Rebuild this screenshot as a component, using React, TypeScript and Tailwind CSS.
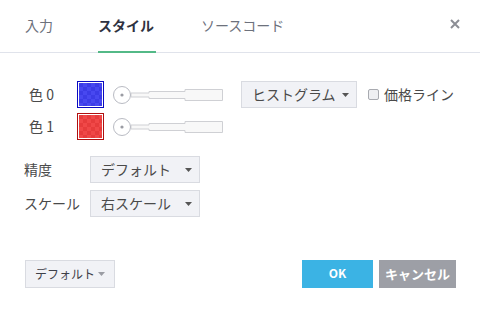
import React from "react";

const FONT = { fontFamily: '"Noto Sans CJK JP", "Noto Sans", sans-serif' };

const Caret = ({ color = "#555" }: { color?: string }) => (
  <svg width="7" height="4" viewBox="0 0 7 4">
    <path d="M0 0 L7 0 L3.5 4 Z" fill={color} />
  </svg>
);

const Swatch = ({ fill, alt, border, id }: { fill: string; alt: string; border: string; id: string }) => (
  <div className="w-[27px] h-[27px] border p-px bg-white" style={{ borderColor: border }}>
    <svg width="23" height="23" className="block">
      <defs>
        <pattern id={id} width="8" height="8" patternUnits="userSpaceOnUse">
          <rect width="8" height="8" fill={fill} />
          <rect width="4" height="4" fill={alt} />
          <rect x="4" y="4" width="4" height="4" fill={alt} />
        </pattern>
      </defs>
      <rect width="23" height="23" fill={`url(#${id})`} />
    </svg>
  </div>
);

const WidthSlider = () => (
  <svg width="112" height="20" viewBox="0 0 112 20" className="block">
    <path
      d="M19 8 L37 8 L37 6.5 L73 6.5 L73 4.5 L110.5 4.5 L110.5 15.5 L73 15.5 L73 13.5 L37 13.5 L37 12 L19 12 Z"
      fill="#f8f8f8"
      stroke="#cfd0d4"
    />
    <circle cx="10" cy="10" r="8.5" fill="#fff" stroke="#b9bbc3" />
    <circle cx="10" cy="10" r="1.6" fill="#9a9ca3" />
  </svg>
);

const Select = ({ label, width }: { label: string; width: string }) => (
  <div
    className={`${width} h-[27px] flex items-center justify-between pl-[10px] pr-[7px] bg-[#f1f2f6] border border-[#d9dbe1] text-[14px] text-[#4a4a4a]`}
  >
    <span>{label}</span>
    <Caret />
  </div>
);

const ColorRow = ({ label, children }: { label: string; children: React.ReactNode }) => (
  <div className="flex items-center h-[27px]">
    <span className="w-[48px] text-[14px] text-[#4a4a4a]">{label}</span>
    {children}
  </div>
);

export default function App() {
  return (
    <div className="w-[480px] h-[312px] bg-white flex flex-col" style={FONT}>
      {/* tabs */}
      <div className="h-[53px] flex items-stretch border-b border-[#e0e3eb] pl-[25px] pr-[20px] gap-[45px] text-[14px]">
        <div className="flex items-center border-b-2 border-transparent -mb-px text-[#6d717c]">入力</div>
        <div className="flex items-center border-b-2 border-[#53b987] -mb-px pr-[2px] font-bold text-[#2f3241]">スタイル</div>
        <div className="flex items-center border-b-2 border-transparent -mb-px text-[#6d717c]">ソースコード</div>
        <div className="ml-auto flex items-center pb-[5px]">
          <svg width="10" height="10" viewBox="0 0 10 10">
            <path d="M1 1 L9 9 M9 1 L1 9" stroke="#8c8e95" strokeWidth="2" />
          </svg>
        </div>
      </div>

      {/* color rows */}
      <div className="pl-[29px] pt-[28px] flex flex-col gap-[5px]">
        <ColorRow label="色 0">
          <Swatch id="p0" fill="#4848f0" alt="#3c3ce6" border="#0a0ac0" />
          <div className="ml-[8px]">
            <WidthSlider />
          </div>
          <div className="ml-[17px]">
            <Select label="ヒストグラム" width="w-[116px]" />
          </div>
          <div className="ml-[11px] w-[11px] h-[11px] rounded-[2px] border border-[#a8aab0] bg-[#eeeff2]" />
          <span className="ml-[5px] text-[14px] text-[#4a4a4a]">価格ライン</span>
        </ColorRow>
        <ColorRow label="色 1">
          <Swatch id="p1" fill="#f04848" alt="#e63c3c" border="#b01010" />
          <div className="ml-[8px]">
            <WidthSlider />
          </div>
        </ColorRow>
      </div>

      {/* selects */}
      <div className="pl-[24px] mt-[16px] flex flex-col gap-[7px] text-[14px] text-[#4a4a4a]">
        <div className="flex items-center">
          <span className="w-[66px]">精度</span>
          <Select label="デフォルト" width="w-[110px]" />
        </div>
        <div className="flex items-center">
          <span className="w-[66px]">スケール</span>
          <Select label="右スケール" width="w-[110px]" />
        </div>
      </div>

      {/* footer */}
      <div className="mt-[43px] flex items-center pl-[25px] pr-[24px]">
        <div className="w-[90px] h-[28px] flex items-center justify-between pl-[9px] pr-[9px] bg-[#f1f2f6] border border-[#d9dbe1] text-[12px] text-[#3e4048]">
          <span>デフォルト</span>
          <Caret color="#9a9ca3" />
        </div>
        <div className="ml-auto flex gap-[6px]">
          <button className="w-[71px] h-[28px] bg-[#3bb3e4] text-white text-[12px] font-bold pb-[3px]">OK</button>
          <button className="w-[77px] h-[28px] bg-[#9d9fa6] text-white text-[13px] font-bold">キャンセル</button>
        </div>
      </div>
    </div>
  );
}
